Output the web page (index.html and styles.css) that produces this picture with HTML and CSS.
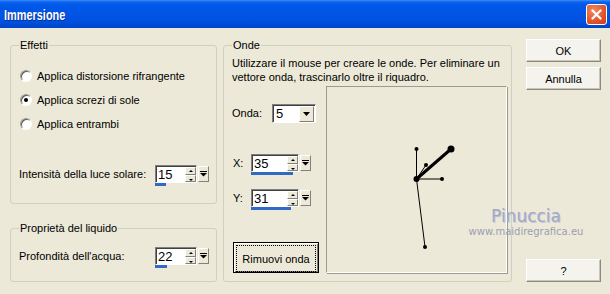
FILE: index.html
```html
<!DOCTYPE html>
<html lang="it">
<head>
  <meta charset="UTF-8">
  <title>Immersione</title>
  <link rel="stylesheet" href="styles.css">
</head>
<body>

<div class="window">
  <div class="titlebar">
    <span class="title">Immersione</span>
    <button class="close-btn" aria-label="Chiudi">
      <svg width="11" height="11" viewBox="0 0 11 11"><path d="M1.5 1.5 L9.5 9.5 M9.5 1.5 L1.5 9.5" stroke="#fff" stroke-width="2.2" stroke-linecap="round"/></svg>
    </button>
  </div>

  <div class="dialog">
    <!-- Left column: effects and liquid -->
    <div class="left-col">
      <fieldset class="group effetti">
        <legend>Effetti</legend>
        <label class="radio"><span class="radio-dot"></span>Applica distorsione rifrangente</label>
        <label class="radio"><span class="radio-dot checked"></span>Applica screzi di sole</label>
        <label class="radio"><span class="radio-dot"></span>Applica entrambi</label>
        <div class="field intensita">
          <span class="field-label">Intensità della luce solare:</span>
          <div class="spin-wrap">
            <div class="spin">
              <div class="spin-box">
                <span class="spin-value">15</span>
                <span class="spin-arrows"><span class="arrow up"></span><span class="arrow down"></span></span>
              </div>
              <span class="spin-drop"><svg width="7" height="6" viewBox="0 0 7 6"><path d="M0 0.5 H7" stroke="#000"/><path d="M0 2 H7 L3.5 5.5 Z" fill="#000"/></svg></span>
            </div>
            <div class="spin-bar" style="width: 11px"></div>
          </div>
        </div>
      </fieldset>

      <fieldset class="group liquido">
        <legend>Proprietà del liquido</legend>
        <div class="field profondita">
          <span class="field-label">Profondità dell'acqua:</span>
          <div class="spin-wrap">
            <div class="spin">
              <div class="spin-box">
                <span class="spin-value">22</span>
                <span class="spin-arrows"><span class="arrow up"></span><span class="arrow down"></span></span>
              </div>
              <span class="spin-drop"><svg width="7" height="6" viewBox="0 0 7 6"><path d="M0 0.5 H7" stroke="#000"/><path d="M0 2 H7 L3.5 5.5 Z" fill="#000"/></svg></span>
            </div>
            <div class="spin-bar" style="width: 12px"></div>
          </div>
        </div>
      </fieldset>
    </div>

    <!-- Waves -->
    <fieldset class="group onde">
      <legend>Onde</legend>
      <p class="hint">Utilizzare il mouse per creare le onde. Per eliminare un<br>vettore onda, trascinarlo oltre il riquadro.</p>
      <div class="onde-body">
        <div class="onde-controls">
          <div class="field onda-row">
            <span class="field-label onda-label">Onda:</span>
            <div class="select">
              <span class="select-value">5</span>
              <span class="select-btn"><svg width="7" height="4" viewBox="0 0 7 4"><path d="M0 0 H7 L3.5 4 Z" fill="#000"/></svg></span>
            </div>
          </div>

          <div class="field xy-row x-row">
            <span class="field-label xy-label">X:</span>
            <div class="spin-wrap">
              <div class="spin">
                <div class="spin-box wide">
                  <span class="spin-value">35</span>
                  <span class="spin-arrows"><span class="arrow up"></span><span class="arrow down"></span></span>
                </div>
                <span class="spin-drop"><svg width="7" height="6" viewBox="0 0 7 6"><path d="M0 0.5 H7" stroke="#000"/><path d="M0 2 H7 L3.5 5.5 Z" fill="#000"/></svg></span>
              </div>
              <div class="spin-bar" style="width: 42px"></div>
            </div>
          </div>

          <div class="field xy-row y-row">
            <span class="field-label xy-label">Y:</span>
            <div class="spin-wrap">
              <div class="spin">
                <div class="spin-box wide">
                  <span class="spin-value">31</span>
                  <span class="spin-arrows"><span class="arrow up"></span><span class="arrow down"></span></span>
                </div>
                <span class="spin-drop"><svg width="7" height="6" viewBox="0 0 7 6"><path d="M0 0.5 H7" stroke="#000"/><path d="M0 2 H7 L3.5 5.5 Z" fill="#000"/></svg></span>
              </div>
              <div class="spin-bar" style="width: 40px"></div>
            </div>
          </div>

          <button class="remove-btn"><span class="focus-rect">Rimuovi onda</span></button>
        </div>

        <div class="wave-canvas">
          <svg width="179" height="185" viewBox="0 0 179 185">
            <g stroke="#000" stroke-width="1" fill="none">
              <line x1="89.5" y1="92" x2="89.5" y2="62"/>
              <line x1="89.5" y1="92" x2="99" y2="78"/>
              <line x1="89.5" y1="92" x2="115" y2="92"/>
              <line x1="89.5" y1="92" x2="98" y2="160"/>
              <line x1="89.5" y1="92" x2="124" y2="62" stroke-width="3"/>
            </g>
            <g fill="#000">
              <circle cx="89.5" cy="62" r="2"/>
              <circle cx="99" cy="78" r="2"/>
              <circle cx="115" cy="92" r="2"/>
              <circle cx="98" cy="160" r="2"/>
              <circle cx="89.5" cy="92" r="3"/>
              <circle cx="124" cy="62" r="3.5"/>
            </g>
          </svg>
        </div>
      </div>
    </fieldset>

    <!-- Dialog buttons -->
    <div class="buttons">
      <button class="btn">OK</button>
      <button class="btn">Annulla</button>
      <button class="btn help">?</button>
    </div>
  </div>

  <div class="watermark">
    <div class="wm-name">Pinuccia</div>
    <div class="wm-site">www.maidiregrafica.eu</div>
  </div>
</div>

</body>
</html>
```

FILE: styles.css
```css
/* Windows XP style dialog */
body {
  margin: 0;
  padding: 0;
  background-color: #ece9d8;
  font-family: 'Liberation Sans', Arial, sans-serif;
  font-size: 11px;
  color: #000;
}
.window {
  position: relative;
  width: 610px;
  height: 294px;
  overflow: hidden;
  background-color: #ece9d8;
}
.titlebar {
  display: flex;
  justify-content: space-between;
  align-items: center;
  height: 28px;
  padding: 0 3px 0 4px;
  box-sizing: border-box;
  background: linear-gradient(#3d8ef8 0, #0a62ee 2px, #0058e8 5px, #0055e5 50%, #0050dd 80%, #0044c8 100%);
}
.title {
  color: #fff;
  font-weight: bold;
  font-size: 14px;
  transform: scaleX(0.78);
  transform-origin: left center;
  text-shadow: 1px 1px #0a2c8c;
  margin-top: 2px;
}
.close-btn {
  display: flex;
  align-items: center;
  justify-content: center;
  width: 21px;
  height: 21px;
  padding: 0;
  margin-top: 1px;
  border: 1px solid #fff;
  border-radius: 3px;
  background: radial-gradient(circle at 35% 30%, #f08a66 0, #e2582f 55%, #c73b17 100%);
}
.dialog {
  display: flex;
  padding: 11px 0 0 10px;
}
.left-col {
  display: flex;
  flex-direction: column;
  width: 207px;
}
.group {
  margin: 0;
  padding: 0 4px 0 8px;
  border: 1px solid #d0d0bf;
  border-radius: 3px;
  box-sizing: border-box;
  min-width: 0;
}
.group legend {
  padding: 0 1px;
  line-height: 13px;
}
.effetti {
  height: 165px;
}
.liquido {
  height: 60px;
  margin-top: 18px;
}
.radio {
  display: flex;
  align-items: center;
  height: 16px;
  margin-top: 8px;
}
.effetti .radio:first-of-type {
  margin-top: 16px;
}
.radio-dot {
  position: relative;
  width: 12px;
  height: 12px;
  margin: 0 5px 0 1px;
  box-sizing: border-box;
  border-radius: 50%;
  border: 1px solid;
  border-color: #9d9b8f #fff #fff #9d9b8f;
  background-color: #fff;
  box-shadow: inset 1px 1px #5a5850;
}
.radio-dot.checked::after {
  content: '';
  position: absolute;
  left: 3px;
  top: 3px;
  width: 4px;
  height: 4px;
  border-radius: 50%;
  background-color: #000;
}
.field {
  display: flex;
  align-items: flex-start;
}
.field-label {
  width: 136px;
  line-height: 18px;
}
.intensita {
  margin-top: 33px;
}
.profondita {
  margin-top: 12px;
}
.spin-wrap {
  display: flex;
  flex-direction: column;
}
.spin {
  display: flex;
}
.spin-box {
  display: flex;
  width: 42px;
  height: 18px;
  box-sizing: border-box;
  border: 1px solid;
  border-color: #808080 #fff #fff #808080;
  box-shadow: inset 1px 1px #404040;
  background-color: #fff;
}
.spin-box.wide {
  width: 48px;
}
.spin-value {
  flex: 1;
  padding: 1px 0 0 2px;
  font-size: 13px;
  line-height: 15px;
}
.spin-arrows {
  display: flex;
  flex-direction: column;
  width: 11px;
  margin: 1px 0 0 0;
}
.arrow {
  position: relative;
  flex: 1;
  box-sizing: border-box;
  border: 1px solid;
  border-color: #fff #808080 #808080 #fff;
  background-color: #ece9d8;
}
.arrow::after {
  content: '';
  position: absolute;
  left: 3px;
  border-left: 2px solid transparent;
  border-right: 2px solid transparent;
}
.arrow.up::after {
  top: 2px;
  border-bottom: 2px solid #000;
}
.arrow.down::after {
  top: 3px;
  border-top: 2px solid #000;
}
.spin-drop {
  display: flex;
  align-items: center;
  justify-content: center;
  width: 11px;
  height: 16px;
  margin: 1px 0 0 1px;
  box-sizing: border-box;
  border: 1px solid;
  border-color: #fff #808080 #808080 #fff;
  background-color: #ece9d8;
}
.spin-bar {
  height: 3px;
  background-color: #316ac5;
}
.onde {
  width: 289px;
  height: 243px;
  margin-left: 6px;
}
.hint {
  margin: 4px 0 0;
  line-height: 14px;
  white-space: nowrap;
}
.onde-body {
  display: flex;
  margin-top: 2px;
}
.onde-controls {
  display: flex;
  flex-direction: column;
  align-items: flex-start;
  width: 87px;
  margin-right: 7px;
}
.onda-row {
  margin-top: 18px;
}
.onda-label {
  width: 40px;
  line-height: 19px;
}
.select {
  display: flex;
  width: 44px;
  height: 19px;
  box-sizing: border-box;
  border: 1px solid;
  border-color: #808080 #fff #fff #808080;
  box-shadow: inset 1px 1px #404040;
  background-color: #fff;
}
.select-value {
  flex: 1;
  padding: 1px 0 0 3px;
  font-size: 13px;
  line-height: 15px;
}
.select-btn {
  display: flex;
  align-items: center;
  justify-content: center;
  width: 15px;
  margin: 1px 1px 0 0;
  box-sizing: border-box;
  border: 1px solid;
  border-color: #fff #808080 #808080 #fff;
  background-color: #ece9d8;
}
.x-row {
  margin-top: 31px;
}
.y-row {
  margin-top: 14px;
}
.xy-label {
  width: 19px;
  padding-left: 1px;
  box-sizing: border-box;
}
.remove-btn {
  width: 86px;
  height: 31px;
  margin: 32px 0 0 1px;
  padding: 2px;
  border: 1px solid #000;
  background-color: #ece9d8;
  box-shadow: inset 1px 1px #fff, inset -1px -1px #808080;
  font-family: inherit;
  font-size: 11px;
}
.focus-rect {
  display: flex;
  align-items: center;
  justify-content: center;
  height: 100%;
  border: 1px dotted #000;
}
.wave-canvas {
  width: 181px;
  height: 187px;
  box-sizing: border-box;
  border: 1px solid;
  border-color: #9d9b8f #fff #fff #9d9b8f;
  box-shadow: 1px 1px #9d9b8f;
}
.buttons {
  display: flex;
  flex-direction: column;
  width: 75px;
  height: 243px;
  margin-left: 14px;
}
.btn {
  height: 23px;
  padding: 0;
  border: 1px solid;
  border-color: #fff #8c8a7f #8c8a7f #fff;
  box-shadow: inset -1px -1px #c9c6b7;
  background-color: #f4f3ee;
  font-family: inherit;
  font-size: 11px;
  color: #000;
}
.btn + .btn {
  margin-top: 5px;
}
.btn.help {
  margin-top: auto;
}
/* watermark overlay */
.watermark {
  position: absolute;
  left: 462px;
  top: 206px;
  width: 128px;
  text-align: center;
  color: #a3a7c6;
  pointer-events: none;
}
.wm-name {
  font-family: 'DejaVu Sans', sans-serif;
  font-size: 17px;
  line-height: 20px;
  text-shadow: 1px 1px #c8c9d8;
}
.wm-site {
  font-family: 'DejaVu Sans', sans-serif;
  font-size: 10px;
  line-height: 12px;
  color: #9c9eb4;
}
```
